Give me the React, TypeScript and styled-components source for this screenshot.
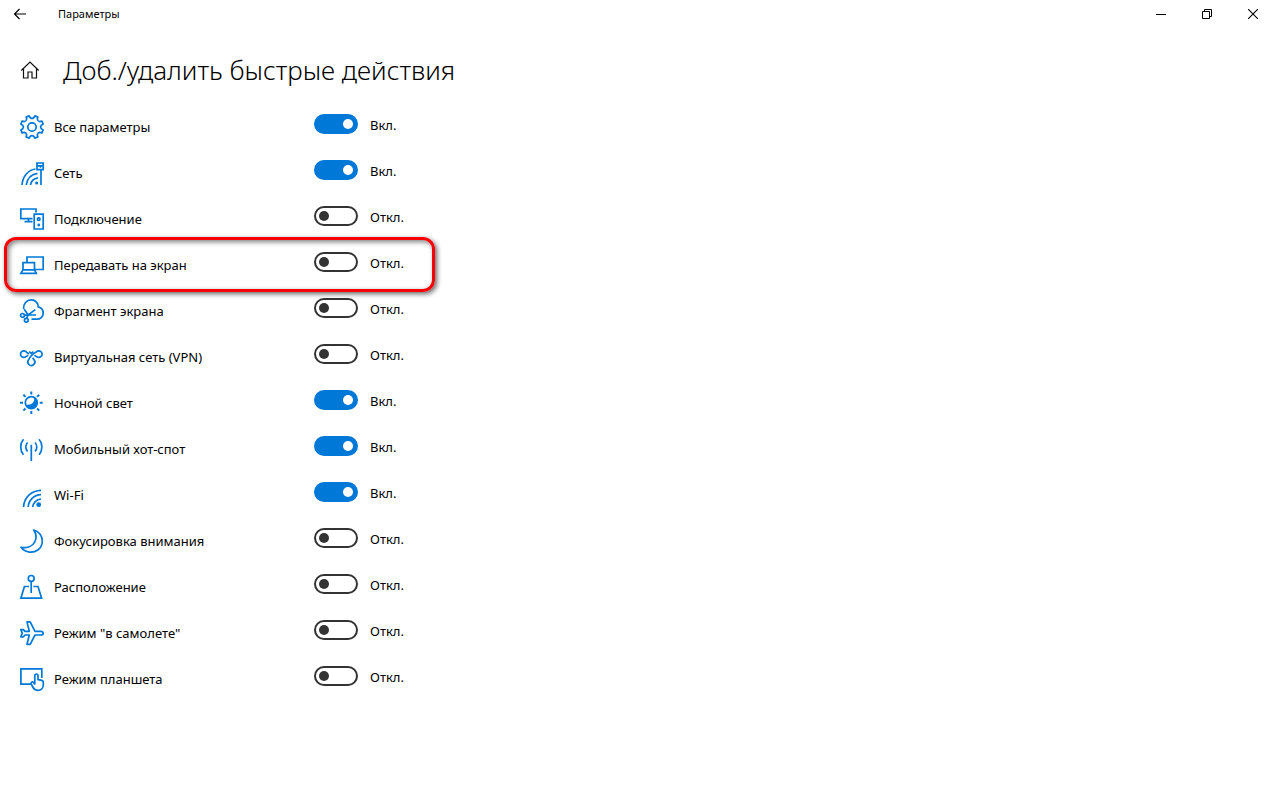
import React, { useState } from 'react';
import styled, { createGlobalStyle } from 'styled-components';

const GlobalStyle = createGlobalStyle`
  * { box-sizing: border-box; }
  body {
    margin: 0;
    background: #fff;
    color: #000;
    font-family: "Noto Sans", "Open Sans", sans-serif;
    font-size: 13px;
    line-height: 20px;
  }
`;

const TitleBar = styled.header`
  display: flex;
  align-items: center;
  height: 28px;
`;

const BackButton = styled.button`
  display: flex;
  align-items: center;
  justify-content: center;
  width: 40px;
  height: 28px;
  padding: 0;
  border: 0;
  background: transparent;
`;

const AppName = styled.span`
  flex: 1;
  padding-left: 18px;
  font-size: 11px;
`;

const WindowButton = styled.button`
  display: flex;
  align-items: center;
  justify-content: flex-end;
  width: 46px;
  height: 28px;
  padding: 0 13px 0 0;
  border: 0;
  background: transparent;
`;

const PageHeader = styled.div`
  display: flex;
  align-items: center;
  gap: 23px;
  height: 76px;
  padding: 8px 20px 0;
`;

const HomeButton = styled.button`
  display: flex;
  width: 20px;
  height: 20px;
  padding: 0;
  border: 0;
  background: transparent;
`;

const Title = styled.h1`
  margin: 0;
  font-size: 26px;
  font-weight: 300;
  line-height: 36px;
`;

const List = styled.ul`
  margin: 0;
  padding: 0;
  list-style: none;
`;

const Row = styled.li`
  position: relative;
  display: flex;
  align-items: center;
  height: 46px;
  padding-left: 18px;
`;

const Name = styled.label`
  display: flex;
  align-items: center;
  gap: 8px;
  width: 296px;
`;

const Switch = styled.input`
  appearance: none;
  display: flex;
  align-items: center;
  justify-content: flex-start;
  width: 44px;
  height: 20px;
  margin: 0 12px 6px 0;
  padding: 0 3px;
  border: 2px solid #333;
  border-radius: 10px;
  background: #fff;

  &::before {
    content: "";
    width: 10px;
    height: 10px;
    border-radius: 50%;
    background: #333;
  }

  &:checked {
    justify-content: flex-end;
    border-color: #0078d7;
    background: #0078d7;
  }

  &:checked::before {
    background: #fff;
  }
`;

const State = styled.span`
  padding-bottom: 4px;
`;

const Highlight = styled.div`
  position: absolute;
  top: -5px;
  left: 4px;
  width: 431px;
  height: 55px;
  border: 3px solid #f80206;
  border-radius: 12px;
  box-shadow: 2px 2px 5px rgba(0, 0, 0, 0.6), inset 2px 2px 5px rgba(0, 0, 0, 0.5);
  pointer-events: none;
`;

const Glyph = styled.svg`
  flex: none;
  fill: none;
  stroke: #0078d7;
  stroke-width: 1.7;
`;

const gearPath = Array.from({ length: 8 }, (_, i) => {
  const at = (deg: number, r: number) => {
    const a = ((22.5 + i * 45 + deg) * Math.PI) / 180;
    return `${(14 + r * Math.sin(a)).toFixed(2)} ${(14 - r * Math.cos(a)).toFixed(2)}`;
  };
  return `${i ? 'L' : 'M'}${at(-12, 9.4)}L${at(-8, 11.5)}L${at(8, 11.5)}L${at(12, 9.4)}Q${at(22.5, 7.9)} ${at(33, 9.4)}`;
}).join('') + 'Z';

const icons = {
  settings: (
    <>
      <path d={gearPath} strokeLinejoin="round" />
      <circle cx="14" cy="14" r="4.2" />
    </>
  ),
  network: (
    <>
      <path d="M4 26C4.5 17.5 10 11 17.5 10M8.3 26C9 20 13 15.3 19.5 14.3M12.5 26C13 22.5 15.5 19.5 20 18.8" />
      <circle cx="18.7" cy="24" r="1.6" fill="#0078d7" stroke="none" />
      <path d="M19 4H25.2V10.6H19ZM19 6.8H25.2M22.5 7V8.8M23 10.6V26" />
    </>
  ),
  connect: (
    <>
      <path d="M14.5 13.6H2.8V4H18V7.5M10.5 13.6V16.6M6.5 16.6H14.5" />
      <path d="M16.2 9.2H25.2V24H16.2Z" />
      <circle cx="20.7" cy="14.2" r="1.3" />
      <circle cx="20.7" cy="20" r="1.4" fill="#0078d7" stroke="none" />
    </>
  ),
  project: (
    <path d="M9 11V6H25.2V18.5H17M5 18.8V11.7H16.5V18.8M5 18.8H16.5L18.3 22.3H2.9Z" />
  ),
  snip: (
    <>
      <path d="M5.6 12C5.2 6.8 8.5 2.8 13.2 2.8C17.3 2.8 20.2 5.8 20.2 9.9C23.2 10.6 25.2 13 25.2 16.2C25.2 19.8 22.3 22.2 18.8 22.2H13.5" />
      <circle cx="4.5" cy="18.4" r="1.9" />
      <circle cx="8.3" cy="23.2" r="1.9" />
      <path d="M6.2 18.2L10.2 18L17.3 12.6M8.7 21.2L10.2 18M10.2 18L6.2 12.3M10.2 18H18" />
    </>
  ),
  vpn: (
    <>
      <path d="M10.6 16.8C12.2 13.6 15 10.6 18.2 9.1A3.3 3.3 0 1 1 18.6 13.6L16.4 12.2" />
      <path d="M10.2 12.2L8 13.6A3.3 3.3 0 1 1 8.4 9.1L11 11" />
      <path d="M10.6 16.8A3.5 3.5 0 1 0 16.2 17L14.6 14.8" />
      <path d="M11.2 8.6L13.3 10.4L15.4 8.6" />
    </>
  ),
  night: (
    <>
      <circle cx="13.3" cy="13.7" r="6" />
      <path d="M16 8.4C17.2 13 13.4 16.6 7.8 15.4C8.8 18.6 11 20 13.5 20C17 20 19.6 17 19.6 13.7C19.6 11.2 18.2 9.2 16 8.4Z" fill="#0078d7" stroke="none" />
      <path d="M13.3 2.5V5.5M13.3 22V25M2 13.7H5M21.7 13.7H24.7M5.4 5.8L7.5 7.9M19.1 19.5L21.2 21.6M21.2 5.8L19.1 7.9M7.5 19.5L5.4 21.6" strokeWidth="2" />
    </>
  ),
  hotspot: (
    <path d="M13.3 9.7V26M5.5 4.2C1.8 8.5 1.8 15.5 5.5 19.8M21.1 4.2C24.8 8.5 24.8 15.5 21.1 19.8M9.6 7.5C7.2 10 7.2 14 9.6 16.5M17 7.5C19.4 10 19.4 14 17 16.5" />
  ),
  wifi: (
    <>
      <path d="M5.6 26C5.8 17 13 9.5 23 9.3M10.2 26C10.5 19.5 16 13.8 23 13.6M14.8 26C15 22 18.5 18.3 23 18" />
      <circle cx="20.7" cy="23.7" r="2.4" fill="#0078d7" stroke="none" />
    </>
  ),
  moon: (
    <path d="M15.7 3C21.3 4.5 24.8 9.5 24.3 15C23.7 21.5 18 25.8 11.5 25.1C7.8 24.7 4.8 22.8 3 20.3C9 21.4 14.5 19.3 16.8 14.8C18.8 10.8 18 6.3 15.7 3Z" strokeLinejoin="round" />
  ),
  location: (
    <>
      <circle cx="13.2" cy="5.4" r="2.9" />
      <path d="M13.2 8.3V20M11 13.5H6.4L2.9 25.2H23.6L20 13.5H15.4" />
    </>
  ),
  plane: (
    <path d="M25.2 14.2C25.2 13.1 24 12.4 22.6 12.4H17L12.2 2.9H9L11.3 12.4H7L5.4 10.6H2.8L4.3 14.2L2.8 17.8H5.4L7 16H11.3L9 25.3H12.2L17 16H22.6C24 16 25.2 15.3 25.2 14.2Z" strokeLinejoin="round" />
  ),
  tablet: (
    <>
      <path d="M13.5 19.2H2.9V3.8H23.8V13" />
      <path d="M16.8 19.5V10.7C16.8 8.4 20 8.4 20 10.7V14.6L23 15.2C24.6 15.5 25.3 16.3 25.3 17.6V20C25.3 23 23 25.3 20 25.3C17.5 25.3 15.8 24 14.8 22L13.2 18.8C12.8 17 14.6 16.4 15.6 17.5L16.8 19.5" strokeLinejoin="round" />
    </>
  ),
};

type Action = { id: keyof typeof icons; name: string; on?: boolean; marked?: boolean };

const actions: Action[] = [
  { id: 'settings', name: 'Все параметры', on: true },
  { id: 'network', name: 'Сеть', on: true },
  { id: 'connect', name: 'Подключение' },
  { id: 'project', name: 'Передавать на экран', marked: true },
  { id: 'snip', name: 'Фрагмент экрана' },
  { id: 'vpn', name: 'Виртуальная сеть (VPN)' },
  { id: 'night', name: 'Ночной свет', on: true },
  { id: 'hotspot', name: 'Мобильный хот-спот', on: true },
  { id: 'wifi', name: 'Wi-Fi', on: true },
  { id: 'moon', name: 'Фокусировка внимания' },
  { id: 'location', name: 'Расположение' },
  { id: 'plane', name: 'Режим "в самолете"' },
  { id: 'tablet', name: 'Режим планшета' },
];

function ActionRow({ action }: { action: Action }) {
  const [on, setOn] = useState(Boolean(action.on));
  return (
    <Row>
      <Name htmlFor={action.id}>
        <Glyph width="28" height="28" viewBox="0 0 28 28" aria-hidden="true">
          {icons[action.id]}
        </Glyph>
        {action.name}
      </Name>
      <Switch type="checkbox" role="switch" id={action.id} checked={on} onChange={() => setOn(!on)} />
      <State>{on ? 'Вкл.' : 'Откл.'}</State>
      {action.marked && <Highlight />}
    </Row>
  );
}

export default function App() {
  return (
    <>
      <GlobalStyle />
      <TitleBar>
        <BackButton aria-label="Назад">
          <svg width="14" height="12" viewBox="0 0 14 12" fill="none" stroke="#000" strokeWidth="1.2">
            <path d="M13 6H1.5M6.5 1L1.5 6L6.5 11" />
          </svg>
        </BackButton>
        <AppName>Параметры</AppName>
        <WindowButton aria-label="Свернуть">
          <svg width="10" height="10" viewBox="0 0 10 10" stroke="#000">
            <path d="M0 5.5H10" />
          </svg>
        </WindowButton>
        <WindowButton aria-label="Свернуть в окно">
          <svg width="10" height="10" viewBox="0 0 10 10" fill="none" stroke="#000">
            <path d="M.5 2.5H7.5V9.5H.5ZM2.5 2.5V.5H9.5V7.5H7.5" />
          </svg>
        </WindowButton>
        <WindowButton aria-label="Закрыть">
          <svg width="10" height="10" viewBox="0 0 10 10" stroke="#000" strokeWidth="1.1">
            <path d="M0 0L10 10M10 0L0 10" />
          </svg>
        </WindowButton>
      </TitleBar>
      <main>
        <PageHeader>
          <HomeButton aria-label="Домашняя страница">
            <svg width="20" height="20" viewBox="0 0 20 20" fill="none" stroke="#111" strokeWidth="1.2">
              <path d="M1.3 10.5L10 2L18.7 10.5M3.5 8.5V18H8V12H12V18H16.5V8.5" />
            </svg>
          </HomeButton>
          <Title>Доб./удалить быстрые действия</Title>
        </PageHeader>
        <List>
          {actions.map((action) => (
            <ActionRow key={action.id} action={action} />
          ))}
        </List>
      </main>
    </>
  );
}
